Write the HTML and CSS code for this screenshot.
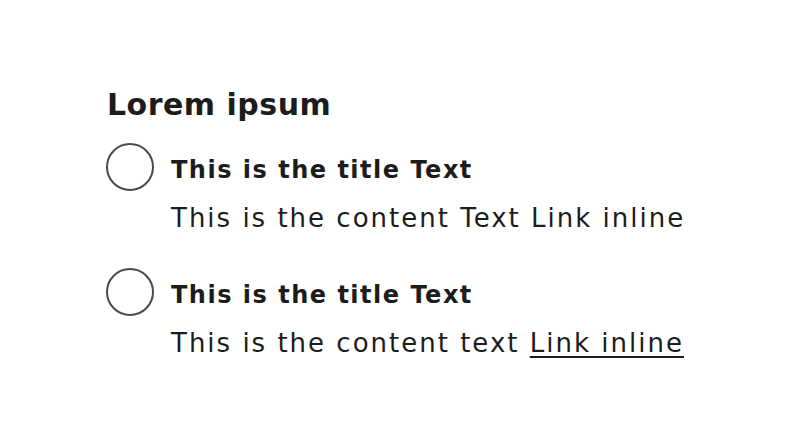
FILE: index.html
```html
<!DOCTYPE html>
<html lang="en">

<head>
  <meta charset="UTF-8" />
  <meta name="viewport" content="width=device-width, initial-scale=1.0" />
  <title>Lorem ipsum</title>
  <link rel="stylesheet" href="styles.css">
</head>

<body>

  <!-- Radio group -->
  <div class="group">
    <h2>Lorem ipsum</h2>

    <label class="option">
      <span class="circle"></span>
      <span class="option-text">
        <span class="title">This is the title Text</span>
        <span class="content">This is the content Text Link inline</span>
      </span>
    </label>

    <label class="option">
      <span class="circle"></span>
      <span class="option-text">
        <span class="title">This is the title Text</span>
        <span class="content">This is the content text <a href="#">Link inline</a></span>
      </span>
    </label>
  </div>

</body>

</html>
```

FILE: styles.css
```css
* {
  margin: 0;
  padding: 0;
  box-sizing: border-box;
}

body {
  font-family: 'DejaVu Sans', sans-serif;
  background: #fff;
  color: #1c1c1c;
}

.group {
  padding: 87px 0 0 106px;
  display: flex;
  flex-direction: column;
}

h2 {
  font-size: 30px;
  font-weight: 600;
  line-height: 36px;
  letter-spacing: 0.5px;
  margin-left: 1px;
  margin-bottom: 20px;
}

.option {
  display: flex;
  gap: 17px;
  margin-bottom: 35px;
  cursor: pointer;
}

.circle {
  flex-shrink: 0;
  width: 48px;
  height: 48px;
  border: 2px solid #4a4a4a;
  border-radius: 50%;
}

.option-text {
  display: flex;
  flex-direction: column;
  gap: 18px;
  padding-top: 12px;
}

.title {
  font-size: 24px;
  font-weight: 600;
  line-height: 30px;
  letter-spacing: 1.5px;
}

.content {
  font-size: 26px;
  line-height: 30px;
  letter-spacing: 2px;
}

.content a {
  color: inherit;
  text-decoration: underline;
  text-underline-offset: 4px;
  text-decoration-thickness: 2px;
}
```
